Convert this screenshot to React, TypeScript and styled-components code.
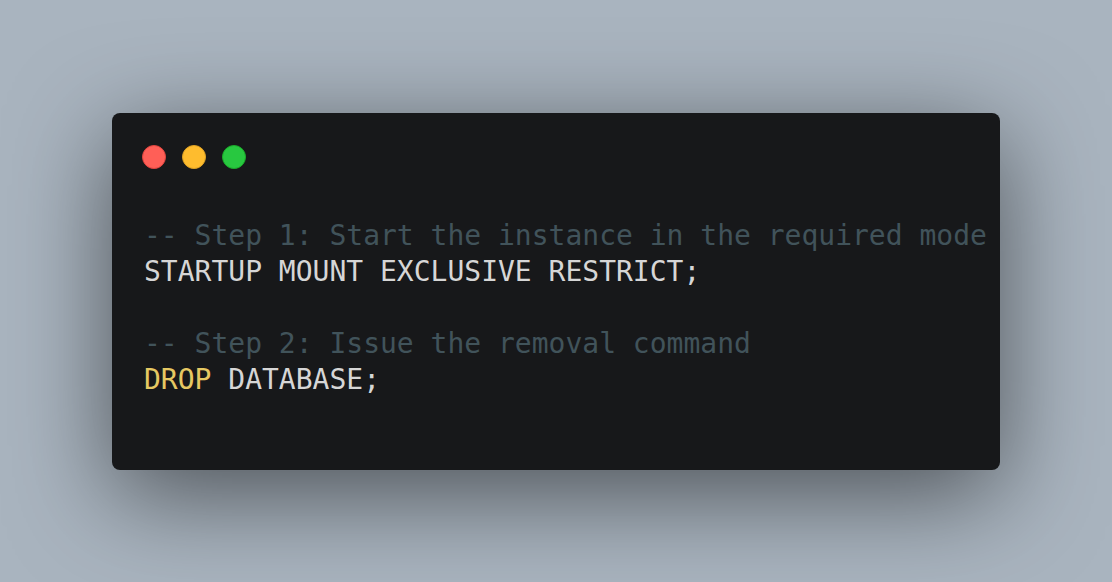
import React from "react";
import styled, { createGlobalStyle } from "styled-components";

const Global = createGlobalStyle`
  html, body { margin: 0; padding: 0; }
  body { background: #a9b4bf; }
`;

const Page = styled.div`
  width: 100vw;
  height: 100vh;
  display: flex;
  align-items: center;
  justify-content: center;
  background: #a9b4bf;
  overflow: hidden;
`;

const Window = styled.div`
  width: 888px;
  height: 357px;
  box-sizing: border-box;
  background: #17181a;
  border-radius: 8px;
  box-shadow: 0 24px 100px rgba(0, 0, 0, 0.55);
  padding: 32px 32px 0 30px;
  display: flex;
  flex-direction: column;
`;

const Dots = styled.div`
  display: flex;
  gap: 16px;
`;

const Dot = styled.span<{ $c: string; $b: string }>`
  width: 24px;
  height: 24px;
  border-radius: 50%;
  box-sizing: border-box;
  background: ${(p) => p.$c};
  border: 1px solid ${(p) => p.$b};
`;

const Code = styled.pre`
  margin: 49px 0 0 2px;
  font-family: "DejaVu Sans Mono", monospace;
  font-size: 28px;
  line-height: 36px;
  color: #d6d6d6;
  white-space: pre;
`;

const Comment = styled.span`
  color: #41535a;
`;

const Keyword = styled.span`
  color: #e6c862;
`;

export default function App() {
  return (
    <>
      <Global />
      <Page>
        <Window>
          <Dots>
            <Dot $c="#ff5f57" $b="#e0443e" />
            <Dot $c="#febc2e" $b="#dea123" />
            <Dot $c="#28c840" $b="#1aab29" />
          </Dots>
          <Code>
            <Comment>-- Step 1: Start the instance in the required mode</Comment>
            {"\n"}STARTUP MOUNT EXCLUSIVE RESTRICT;{"\n\n"}
            <Comment>-- Step 2: Issue the removal command</Comment>
            {"\n"}
            <Keyword>DROP</Keyword> DATABASE;
          </Code>
        </Window>
      </Page>
    </>
  );
}
